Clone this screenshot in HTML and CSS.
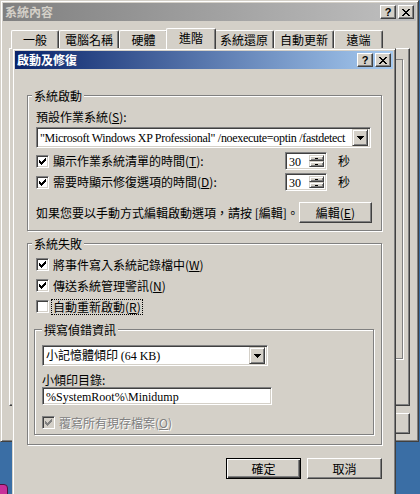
FILE: index.html
```html
<!DOCTYPE html>
<html lang="zh-Hant">
<head>
<meta charset="utf-8">
<title>啟動及修復</title>
<link rel="stylesheet" href="styles.css">
</head>
<body>
<div class="desktop">
  <div class="deskicon"></div>

  <div class="win outer">
    <div class="caption inactive">
      <span class="cap-title">系統內容</span>
      <span class="cap-btns">
        <span class="cbtn"><span class="q">?</span></span>
        <span class="cbtn"><svg width="8" height="7" viewBox="0 0 8 7" shape-rendering="crispEdges"><path d="M0 0h2v1h-2zM6 0h2v1h-2zM1 1h2v1h-2zM5 1h2v1h-2zM2 2h4v1h-4zM3 3h2v1h-2zM2 4h4v1h-4zM1 5h2v1h-2zM5 5h2v1h-2zM0 6h2v1h-2zM6 6h2v1h-2z" fill="#000"/></svg></span>
      </span>
    </div>
    <div class="tabs">
      <span class="tab t48">一般</span>
      <span class="tab t60">電腦名稱</span>
      <span class="tab t49">硬體</span>
      <span class="tab sel">進階</span>
      <span class="tab t60">系統還原</span>
      <span class="tab t60">自動更新</span>
      <span class="tab t49">遠端</span>
    </div>
    <div class="tabpanel"><div class="og"></div></div>
    <div class="outer-btns"><span class="btn apply">套用(<u>A</u>)</span></div>
  </div>

  <div class="win dialog">
    <div class="caption active">
      <span class="cap-title">啟動及修復</span>
      <span class="cap-btns">
        <span class="cbtn"><span class="q">?</span></span>
        <span class="cbtn"><svg width="8" height="7" viewBox="0 0 8 7" shape-rendering="crispEdges"><path d="M0 0h2v1h-2zM6 0h2v1h-2zM1 1h2v1h-2zM5 1h2v1h-2zM2 2h4v1h-4zM3 3h2v1h-2zM2 4h4v1h-4zM1 5h2v1h-2zM5 5h2v1h-2zM0 6h2v1h-2zM6 6h2v1h-2z" fill="#000"/></svg></span>
      </span>
    </div>
    <div class="client">
      <div class="group g1">
        <div class="legend">系統啟動</div>
        <div class="lbl l-os">預設作業系統(<u>S</u>):</div>
        <div class="combo c-os">
          <span class="ctext serif os-text">"Microsoft Windows XP Professional" /noexecute=optin /fastdetect</span>
          <span class="dd"><svg width="7" height="4" viewBox="0 0 7 4" shape-rendering="crispEdges"><path d="M0 0h7v1h-7zM1 1h5v1h-5zM2 2h3v1h-3zM3 3h1v1h-1z" fill="#000"/></svg></span>
        </div>
        <div class="row r1">
          <span class="chk on"><svg width="7" height="7" viewBox="0 0 7 7" shape-rendering="crispEdges"><path d="M0 2h1v3h-1zM1 3h1v3h-1zM2 4h1v3h-1zM3 3h1v3h-1zM4 2h1v3h-1zM5 1h1v3h-1zM6 0h1v3h-1z" fill="#000"/></svg></span>
          <span class="rtext">顯示作業系統清單的時間(<u>T</u>):</span>
          <span class="spin"><span class="stext serif">30</span><span class="sbtns"><span class="sb"><i class="up"></i></span><span class="sb"><i class="dn"></i></span></span></span>
          <span class="sec">秒</span>
        </div>
        <div class="row r2">
          <span class="chk on"><svg width="7" height="7" viewBox="0 0 7 7" shape-rendering="crispEdges"><path d="M0 2h1v3h-1zM1 3h1v3h-1zM2 4h1v3h-1zM3 3h1v3h-1zM4 2h1v3h-1zM5 1h1v3h-1zM6 0h1v3h-1z" fill="#000"/></svg></span>
          <span class="rtext">需要時顯示修復選項的時間(<u>D</u>):</span>
          <span class="spin"><span class="stext serif">30</span><span class="sbtns"><span class="sb"><i class="up"></i></span><span class="sb"><i class="dn"></i></span></span></span>
          <span class="sec">秒</span>
        </div>
        <div class="row r3">
          <span class="rtext">如果您要以手動方式編輯啟動選項，請按 [編輯]。</span>
          <span class="btn edit">編輯(<u>E</u>)</span>
        </div>
      </div>

      <div class="group g2">
        <div class="legend">系統失敗</div>
        <div class="crow c1">
          <span class="chk on"><svg width="7" height="7" viewBox="0 0 7 7" shape-rendering="crispEdges"><path d="M0 2h1v3h-1zM1 3h1v3h-1zM2 4h1v3h-1zM3 3h1v3h-1zM4 2h1v3h-1zM5 1h1v3h-1zM6 0h1v3h-1z" fill="#000"/></svg></span>
          <span class="rtext">將事件寫入系統記錄檔中(<u>W</u>)</span>
        </div>
        <div class="crow c2">
          <span class="chk on"><svg width="7" height="7" viewBox="0 0 7 7" shape-rendering="crispEdges"><path d="M0 2h1v3h-1zM1 3h1v3h-1zM2 4h1v3h-1zM3 3h1v3h-1zM4 2h1v3h-1zM5 1h1v3h-1zM6 0h1v3h-1z" fill="#000"/></svg></span>
          <span class="rtext">傳送系統管理警訊(<u>N</u>)</span>
        </div>
        <div class="crow c3">
          <span class="chk"></span>
          <span class="rtext focus">自動重新啟動(<u>R</u>)</span>
        </div>

        <div class="group g3">
          <div class="legend">撰寫偵錯資訊</div>
          <div class="combo c-dump">
            <span class="ctext">小記憶體傾印 <span class="serif">(64 KB)</span></span>
            <span class="dd"><svg width="7" height="4" viewBox="0 0 7 4" shape-rendering="crispEdges"><path d="M0 0h7v1h-7zM1 1h5v1h-5zM2 2h3v1h-3zM3 3h1v1h-1z" fill="#000"/></svg></span>
          </div>
          <div class="lbl l-dir">小傾印目錄:</div>
          <div class="edit-field"><span class="serif">%SystemRoot%\Minidump</span></div>
          <div class="crow c4 disabled">
            <span class="chk on dis"><svg width="7" height="7" viewBox="0 0 7 7" shape-rendering="crispEdges"><path d="M0 2h1v3h-1zM1 3h1v3h-1zM2 4h1v3h-1zM3 3h1v3h-1zM4 2h1v3h-1zM5 1h1v3h-1zM6 0h1v3h-1z" fill="#808080"/></svg></span>
            <span class="rtext">覆寫所有現存檔案(<u>O</u>)</span>
          </div>
        </div>
      </div>

      <div class="actions">
        <span class="btn def">確定</span>
        <span class="btn">取消</span>
      </div>
    </div>
  </div>
</div>
</body>
</html>
```

FILE: styles.css
```css
* { box-sizing: border-box; }
html, body { margin: 0; padding: 0; }
body {
  width: 420px;
  height: 494px;
  overflow: hidden;
  background: #3a6ea5;
  font: 12px/14px "Noto Sans CJK TC", "Noto Sans CJK SC", sans-serif;
  color: #000;
}
u { text-decoration: underline; text-underline-offset: 1px; }
.serif { font-family: "Liberation Serif", "Noto Sans CJK TC", serif; }

.desktop { position: relative; width: 420px; height: 494px; }

.deskicon {
  position: absolute; left: -6px; top: 484px;
  width: 14px; height: 14px;
  background: #c8309a; border: 1px solid #501040; border-radius: 4px;
}

/* classic window frame */
.win {
  position: absolute;
  background: #d4d0c8;
  border: 1px solid;
  border-color: #d4d0c8 #404040 #404040 #d4d0c8;
  box-shadow: inset 1px 1px #fff, inset -1px -1px #808080;
  padding: 2px;
}
.outer { left: 0; top: 0; width: 419px; height: 442px; }
.dialog { left: 12px; top: 48px; width: 384px; height: 470px; padding: 2px; }

.caption {
  height: 18px;
  display: flex;
  align-items: center;
  justify-content: space-between;
  padding: 0 2px 0 2px;
  font-weight: bold;
}
.caption.inactive { background: linear-gradient(to right, #808080, #c0c0c0); color: #d4d0c8; }
.caption.active { background: linear-gradient(to right, #0a246a, #a6caf0); color: #fff; }
.cap-title { line-height: 18px; }
.cap-btns { display: flex; gap: 2px; }
.cbtn {
  width: 16px; height: 14px;
  display: flex; align-items: center; justify-content: center;
  background: #d4d0c8;
  border: 1px solid;
  border-color: #fff #404040 #404040 #fff;
  box-shadow: inset -1px -1px #808080;
  color: #000;
}
.cbtn .q { font: bold 11px/12px "Liberation Sans", sans-serif; }

/* outer tabs */
.tabs {
  display: flex;
  align-items: flex-end;
  height: 21px;
  margin: 7px 0 0 8px;
  position: relative;
  z-index: 1;
}
.tab {
  height: 18px;
  display: flex; align-items: center; justify-content: center;
  background: #d4d0c8;
  border-left: 1px solid #fff;
  border-top: 1px solid #fff;
  border-right: 1px solid #404040;
  box-shadow: inset -1px 0 #808080;
  border-radius: 2px 2px 0 0;
  margin-bottom: 1px;
}
.t48 { width: 48px; }
.t49 { width: 49px; }
.t60 { width: 60px; }
.tab.sel { width: 50px; height: 21px; margin: 0 -2px 0 -2px; position: relative; z-index: 2; padding-bottom: 2px; }
.tabpanel {
  margin: -1px 0 0 6px;
  width: 401px; height: 358px;
  border: 1px solid;
  border-color: #fff #404040 #404040 #fff;
  box-shadow: inset -1px -1px #808080;
  padding: 10px 6px 0 0;
  display: flex; justify-content: flex-end;
}
.og {
  width: 10px; height: 300px;
  border: 1px solid #808080; border-left: 0;
  box-shadow: 1px 1px #fff;
}
.outer-btns { display: flex; justify-content: flex-end; margin: 7px 6px 0 0; }
.apply { width: 75px; }

/* dialog client */
.client { padding: 26px 11px 0 12px; }
.group {
  border: 1px solid #808080;
  box-shadow: inset 1px 1px #fff, 1px 1px #fff;
}
.legend {
  width: max-content;
  background: #d4d0c8;
  padding: 0 2px;
  margin-top: -7px;
  line-height: 14px;
}
.g1 { height: 136px; padding: 0 10px 0 8px; }
.g1 > .legend { margin-left: -4px; }
.lbl { line-height: 14px; }
.l-os { margin-top: 7px; }

.combo {
  display: flex; align-items: center;
  height: 21px;
  background: #fff;
  border: 1px solid;
  border-color: #808080 #fff #fff #808080;
  box-shadow: inset 1px 1px #404040, inset -1px -1px #d4d0c8;
  padding: 2px;
}
.c-os { margin-top: 3px; }
.ctext { flex: 1; padding-left: 1px; white-space: nowrap; font-size: 12px; }
.os-text { letter-spacing: -0.3px; }
.dd {
  width: 16px; height: 17px;
  flex: none;
  display: flex; align-items: center; justify-content: center;
  background: #d4d0c8;
  border: 1px solid;
  border-color: #d4d0c8 #404040 #404040 #d4d0c8;
  box-shadow: inset 1px 1px #fff, inset -1px -1px #808080;
}

.row { display: flex; align-items: center; height: 18px; }
.r1 { margin-top: 4px; }
.r2 { margin-top: 3px; }
.r3 { margin-top: 11px; height: 21px; }
.rtext { white-space: nowrap; }
.row .rtext { flex: 1; }
.chk {
  width: 13px; height: 13px;
  flex: none;
  display: flex; align-items: center; justify-content: center;
  background: #fff;
  border: 1px solid;
  border-color: #808080 #fff #fff #808080;
  box-shadow: inset 1px 1px #404040, inset -1px -1px #d4d0c8;
  margin-right: 4px;
}
.chk.dis { background: #d4d0c8; }
.spin {
  width: 42px; height: 18px;
  display: flex;
  background: #fff;
  border: 1px solid;
  border-color: #808080 #fff #fff #808080;
  box-shadow: inset 1px 1px #404040, inset -1px -1px #d4d0c8;
  padding: 2px;
}
.stext { flex: 1; line-height: 14px; padding-left: 1px; }
.sbtns { width: 15px; display: flex; flex-direction: column; }
.sb {
  flex: 1;
  display: flex; align-items: center; justify-content: center;
  background: #d4d0c8;
  border: 1px solid;
  border-color: #d4d0c8 #404040 #404040 #d4d0c8;
  box-shadow: inset 1px 1px #fff, inset -1px -1px #808080;
}
.sb i { width: 3px; height: 1px; background: #000; display: block; }
.sec { margin: 0 21px 0 11px; }

.btn {
  display: inline-flex; align-items: center; justify-content: center;
  height: 21px;
  background: #d4d0c8;
  border: 1px solid;
  border-color: #fff #404040 #404040 #fff;
  box-shadow: inset -1px -1px #808080;
  white-space: nowrap;
}
.edit { width: 75px; margin-right: -1px; }

.g2 { height: 202px; margin-top: 12px; padding: 0 0 0 8px; }
.g2 > .legend { margin-left: -4px; }
.crow { display: flex; align-items: center; height: 17px; }
.c1 { margin-top: 5px; }
.c2 { margin-top: 4px; }
.c3 { margin-top: 4px; }
.focus { outline: 1px dotted #000; outline-offset: 0; padding: 0 1px; margin-left: -1px; }

.g3 { width: 340px; height: 106px; margin: 14px 0 0 -2px; padding: 0 0 0 7px; }
.g3 > .legend { margin-left: 0; }
.c-dump { width: 226px; margin-top: 8px; }
.l-dir { margin-top: 7px; }
.edit-field {
  width: 230px; height: 18px;
  background: #fff;
  border: 1px solid;
  border-color: #808080 #fff #fff #808080;
  box-shadow: inset 1px 1px #404040, inset -1px -1px #d4d0c8;
  padding: 1px 3px;
  line-height: 14px;
}
.c4 { margin-top: 9px; }
.disabled .rtext { color: #808080; text-shadow: 1px 1px #fff; }

.actions { display: flex; justify-content: flex-end; gap: 6px; margin: 13px 0 0 0; }
.actions .btn { width: 75px; }
.btn.def {
  border: 1px solid #000;
  box-shadow: inset 1px 1px #fff, inset -1px -1px #404040, inset -2px -2px #808080;
}
```
